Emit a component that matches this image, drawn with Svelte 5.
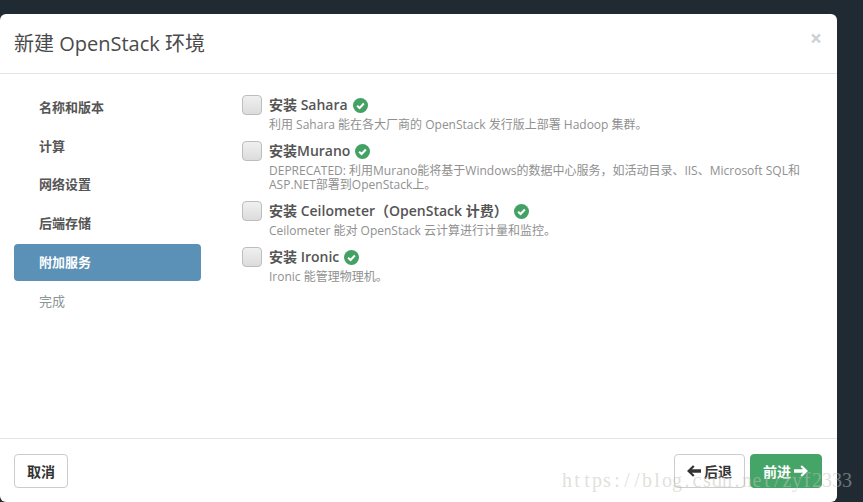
<script lang="ts">
  const steps = [
    { label: "名称和版本", state: "done" },
    { label: "计算", state: "done" },
    { label: "网络设置", state: "done" },
    { label: "后端存储", state: "done" },
    { label: "附加服务", state: "active" },
    { label: "完成", state: "todo" }
  ];

  const services = [
    { title: "安装 Sahara", gap: false, desc: ["利用 Sahara 能在各大厂商的 OpenStack 发行版上部署 Hadoop 集群。"] },
    { title: "安装Murano", gap: false, desc: ["DEPRECATED: 利用Murano能将基于Windows的数据中心服务，如活动目录、IIS、Microsoft SQL和", "ASP.NET部署到OpenStack上。"] },
    { title: "安装 Ceilometer（OpenStack 计费）", gap: true, desc: ["Ceilometer 能对 OpenStack 云计算进行计量和监控。"] },
    { title: "安装 Ironic", gap: false, desc: ["Ironic 能管理物理机。"] }
  ];

  // the watermark has a fixed 10px pitch
  const mark = "https://blog.csdn.net/zyf2333".split("");
</script>

<div class="backdrop">
  <div class="modal">
    <header class="head">
      <h1>新建 OpenStack 环境</h1>
      <span class="close">×</span>
    </header>

    <div class="body">
      <nav class="steps">
        {#each steps as step}
          <div class="step {step.state}">{step.label}</div>
        {/each}
      </nav>

      <div class="services">
        {#each services as s}
          <div class="service">
            <span class="box"></span>
            <div class="info">
              <div class="title">
                <span>{s.title}</span>
                <svg class="ok" class:gap={s.gap} viewBox="0 0 16 16" width="15" height="15">
                  <circle cx="8" cy="8" r="8" fill="#43a163" />
                  <path d="M4.4 8.2 7 10.7 11.6 5.9" fill="none" stroke="#fff" stroke-width="2.2" />
                </svg>
              </div>
              <div class="desc">
                {#each s.desc as line}
                  <div>{line}</div>
                {/each}
              </div>
            </div>
          </div>
        {/each}
      </div>
    </div>

    <footer class="foot">
      <button class="btn">取消</button>
      <div class="right">
        <button class="btn">
          <svg viewBox="0 0 14 12" width="14" height="12"><path d="M0 6 6 0.2 7.6 1.8 4.9 4.3H14V7.7H4.9L7.6 10.2 6 11.8Z" fill="#333" /></svg>
          后退
        </button>
        <button class="btn next">
          前进
          <svg viewBox="0 0 14 12" width="14" height="12"><path d="M14 6 8 0.2 6.4 1.8 9.1 4.3H0V7.7H9.1L6.4 10.2 8 11.8Z" fill="#fff" /></svg>
        </button>
      </div>
    </footer>

    <div class="mark">{#each mark as ch}<span>{ch}</span>{/each}</div>
  </div>
</div>

<style>
  :global(body) {
    margin: 0;
  }
  .backdrop {
    position: relative;
    width: 863px;
    height: 502px;
    overflow: hidden;
    background: #1f2a33;
    padding-top: 14px;
    box-sizing: border-box;
    font-family: "Open Sans", "Noto Sans CJK SC", sans-serif;
    color: #444;
  }
  .modal {
    width: 837px;
    height: 488px;
    background: #fff;
    border-radius: 6px;
    display: flex;
    flex-direction: column;
  }
  .head {
    height: 60px;
    box-sizing: border-box;
    flex: none;
    border-bottom: 1px solid #e5e5e5;
    display: flex;
    align-items: center;
    justify-content: space-between;
    padding: 0 15px 0 14px;
  }
  h1 {
    margin: 0;
    font-size: 20px;
    font-weight: 400;
    color: #4a4a4a;
    line-height: 58px;
  }
  .close {
    font-size: 21px;
    font-weight: 700;
    color: #ccd1d4;
    line-height: 1;
    margin-bottom: 11px;
  }
  .body {
    flex: 1;
    display: flex;
    padding-left: 14px;
  }
  .steps {
    width: 187px;
    flex: none;
    padding-top: 14.8px;
    display: flex;
    flex-direction: column;
    gap: 1.8px;
  }
  .step {
    height: 37px;
    line-height: 37px;
    padding-left: 25px;
    font-size: 13px;
    font-weight: 700;
    border-radius: 4px;
    color: #555;
  }
  .step.active {
    background: #5b91b7;
    color: #fff;
  }
  .step.todo {
    font-weight: 400;
    color: #8b9696;
  }
  .services {
    padding: 21px 0 0 41px;
    display: flex;
    flex-direction: column;
    gap: 9px;
  }
  .service {
    display: flex;
    gap: 7px;
  }
  .box {
    width: 18px;
    height: 18px;
    flex: none;
    border: 1px solid #bdbdbd;
    border-radius: 4px;
    background: linear-gradient(#f0f0f0, #dcdcdc);
  }
  .title {
    display: flex;
    align-items: center;
    gap: 5px;
    font-size: 14px;
    font-weight: 600;
    line-height: 20px;
    color: #555;
  }
  .ok.gap {
    margin-left: 1px;
  }
  .desc {
    font-size: 12px;
    line-height: 14px;
    color: #909090;
    white-space: nowrap;
    margin-top: 3px;
  }
  .foot {
    height: 64px;
    box-sizing: border-box;
    flex: none;
    border-top: 1px solid #e5e5e5;
    display: flex;
    justify-content: space-between;
    align-items: flex-start;
    padding: 15px 15px 0 14px;
  }
  .right {
    display: flex;
    gap: 5px;
  }
  .btn {
    height: 34px;
    padding: 0 12px;
    border: 1px solid #ccc;
    border-radius: 4px;
    background: #fff;
    color: #333;
    font-family: inherit;
    font-size: 14px;
    font-weight: 700;
    display: flex;
    align-items: center;
    gap: 3px;
  }
  .btn.next {
    background: #45a468;
    border-color: #45a468;
    color: #fff;
    padding-right: 13px;
  }
  .mark {
    position: absolute;
    left: 562px;
    top: 470px;
    display: flex;
    font-family: "Liberation Serif", serif;
    font-size: 20px;
    line-height: 20px;
    color: rgba(195, 193, 185, 0.5);
    white-space: nowrap;
  }
  .mark span {
    width: 10px;
    text-align: center;
  }
</style>
